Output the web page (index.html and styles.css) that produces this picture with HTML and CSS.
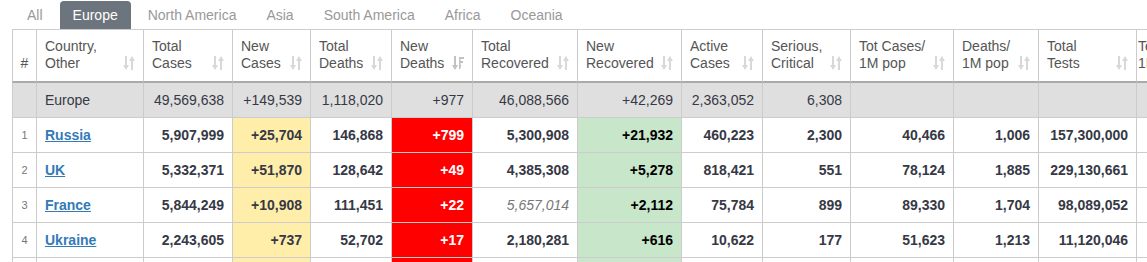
FILE: index.html
```html
<!DOCTYPE html>
<html lang="en">
<head>
<meta charset="utf-8">
<title>Europe</title>
<link rel="stylesheet" href="styles.css">
</head>
<body>
<div class="page">
  <nav class="tabs">
    <span class="tab">All</span>
    <span class="tab active">Europe</span>
    <span class="tab">North America</span>
    <span class="tab">Asia</span>
    <span class="tab">South America</span>
    <span class="tab">Africa</span>
    <span class="tab">Oceania</span>
  </nav>
  <div class="table-wrap">
    <table class="stats">
      <thead>
        <tr>
          <th class="w-rank">#</th>
          <th class="w-country"><div class="hd"><span>Country,<br>Other</span><svg class="sort" viewBox="0 0 12 14"><path d="M2 0h2v9h2l-3 5-3-5h2zM8 14h2V5h2L9 0 6 5h2z"/></svg></div></th>
          <th class="w-tc"><div class="hd"><span>Total<br>Cases</span><svg class="sort" viewBox="0 0 12 14"><path d="M2 0h2v9h2l-3 5-3-5h2zM8 14h2V5h2L9 0 6 5h2z"/></svg></div></th>
          <th class="w-nc"><div class="hd"><span>New<br>Cases</span><svg class="sort" viewBox="0 0 12 14"><path d="M2 0h2v9h2l-3 5-3-5h2zM8 14h2V5h2L9 0 6 5h2z"/></svg></div></th>
          <th class="w-td"><div class="hd"><span>Total<br>Deaths</span><svg class="sort" viewBox="0 0 12 14"><path d="M2 0h2v9h2l-3 5-3-5h2zM8 14h2V5h2L9 0 6 5h2z"/></svg></div></th>
          <th class="w-nd"><div class="hd"><span>New<br>Deaths</span><svg class="sort desc" viewBox="0 0 12 14"><path d="M2 0h2v9h2l-3 5-3-5h2zM7 1h5v2H7zM7 5h4v2H7zM7 9h2v2H7zM7 1h1.5v12H7z"/></svg></div></th>
          <th class="w-tr"><div class="hd"><span>Total<br>Recovered</span><svg class="sort" viewBox="0 0 12 14"><path d="M2 0h2v9h2l-3 5-3-5h2zM8 14h2V5h2L9 0 6 5h2z"/></svg></div></th>
          <th class="w-nr"><div class="hd"><span>New<br>Recovered</span><svg class="sort" viewBox="0 0 12 14"><path d="M2 0h2v9h2l-3 5-3-5h2zM8 14h2V5h2L9 0 6 5h2z"/></svg></div></th>
          <th class="w-ac"><div class="hd"><span>Active<br>Cases</span><svg class="sort" viewBox="0 0 12 14"><path d="M2 0h2v9h2l-3 5-3-5h2zM8 14h2V5h2L9 0 6 5h2z"/></svg></div></th>
          <th class="w-sc"><div class="hd"><span>Serious,<br>Critical</span><svg class="sort" viewBox="0 0 12 14"><path d="M2 0h2v9h2l-3 5-3-5h2zM8 14h2V5h2L9 0 6 5h2z"/></svg></div></th>
          <th class="w-cpm"><div class="hd"><span>Tot&nbsp;Cases/<br>1M pop</span><svg class="sort" viewBox="0 0 12 14"><path d="M2 0h2v9h2l-3 5-3-5h2zM8 14h2V5h2L9 0 6 5h2z"/></svg></div></th>
          <th class="w-dpm"><div class="hd"><span>Deaths/<br>1M pop</span><svg class="sort" viewBox="0 0 12 14"><path d="M2 0h2v9h2l-3 5-3-5h2zM8 14h2V5h2L9 0 6 5h2z"/></svg></div></th>
          <th class="w-tt"><div class="hd"><span>Total<br>Tests</span><svg class="sort" viewBox="0 0 12 14"><path d="M2 0h2v9h2l-3 5-3-5h2zM8 14h2V5h2L9 0 6 5h2z"/></svg></div></th>
          <th class="w-tpm cut"><div class="hd"><span>Tests/<br>1M pop</span><svg class="sort" viewBox="0 0 12 14"><path d="M2 0h2v9h2l-3 5-3-5h2zM8 14h2V5h2L9 0 6 5h2z"/></svg></div></th>
        </tr>
      </thead>
      <tbody>
        <tr class="total">
          <td class="rank"></td>
          <td class="country">Europe</td>
          <td>49,569,638</td>
          <td>+149,539</td>
          <td>1,118,020</td>
          <td>+977</td>
          <td>46,088,566</td>
          <td>+42,269</td>
          <td>2,363,052</td>
          <td>6,308</td>
          <td></td>
          <td></td>
          <td></td>
          <td></td>
        </tr>
        <tr>
          <td class="rank">1</td>
          <td class="country"><a href="#">Russia</a></td>
          <td>5,907,999</td>
          <td class="nc">+25,704</td>
          <td>146,868</td>
          <td class="nd">+799</td>
          <td>5,300,908</td>
          <td class="nr">+21,932</td>
          <td>460,223</td>
          <td>2,300</td>
          <td>40,466</td>
          <td>1,006</td>
          <td>157,300,000</td>
          <td></td>
        </tr>
        <tr>
          <td class="rank">2</td>
          <td class="country"><a href="#">UK</a></td>
          <td>5,332,371</td>
          <td class="nc">+51,870</td>
          <td>128,642</td>
          <td class="nd">+49</td>
          <td>4,385,308</td>
          <td class="nr">+5,278</td>
          <td>818,421</td>
          <td>551</td>
          <td>78,124</td>
          <td>1,885</td>
          <td>229,130,661</td>
          <td></td>
        </tr>
        <tr>
          <td class="rank">3</td>
          <td class="country"><a href="#">France</a></td>
          <td>5,844,249</td>
          <td class="nc">+10,908</td>
          <td>111,451</td>
          <td class="nd">+22</td>
          <td class="est">5,657,014</td>
          <td class="nr">+2,112</td>
          <td>75,784</td>
          <td>899</td>
          <td>89,330</td>
          <td>1,704</td>
          <td>98,089,052</td>
          <td></td>
        </tr>
        <tr>
          <td class="rank">4</td>
          <td class="country"><a href="#">Ukraine</a></td>
          <td>2,243,605</td>
          <td class="nc">+737</td>
          <td>52,702</td>
          <td class="nd">+17</td>
          <td>2,180,281</td>
          <td class="nr">+616</td>
          <td>10,622</td>
          <td>177</td>
          <td>51,623</td>
          <td>1,213</td>
          <td>11,120,046</td>
          <td></td>
        </tr>
        <tr>
          <td class="rank">5</td>
          <td class="country"><a href="#">Poland</a></td>
          <td>2,909,435</td>
          <td class="nc">+1,205</td>
          <td>74,569</td>
          <td class="nd">+14</td>
          <td>2,663,470</td>
          <td class="nr">+3,117</td>
          <td>171,396</td>
          <td>482</td>
          <td>76,961</td>
          <td>1,972</td>
          <td>19,835,622</td>
          <td></td>
        </tr>
      </tbody>
    </table>
  </div>
</div>
</body>
</html>
```

FILE: styles.css
```css
html, body {
  margin: 0;
  overflow: hidden;
  background: #fff;
}

body {
  font-family: "Liberation Sans", Arial, sans-serif;
  font-size: 14px;
  color: #363945;
}

.page {
  padding: 1px 0 0 12px;
}

.tabs {
  display: flex;
  height: 28px;
}

.tab {
  padding: 6px 15px 6px;
  line-height: 16px;
  color: #999;
  white-space: nowrap;
}

.tab.active {
  background: #6c757d;
  color: #fff;
  border-radius: 4px 4px 0 0;
  padding: 6px 13px 6px;
  margin: 0 2px;
}

.table-wrap {
  overflow: hidden;
}

.stats {
  border-collapse: separate;
  border-spacing: 0;
  table-layout: fixed;
  width: 1225px;
}

.stats th,
.stats td {
  box-sizing: border-box;
  border-right: 1px solid #ccc;
  border-bottom: 1px solid #ccc;
}

.stats th:first-child,
.stats td:first-child {
  border-left: 1px solid #ccc;
}

.stats th {
  border-top: 1px solid #ccc;
  border-bottom: 2px solid #aaa;
  padding: 8px 8px 9px;
  line-height: 17px;
  font-weight: normal;
  color: #555;
  text-align: left;
  vertical-align: bottom;
}

.stats th.w-rank {
  text-align: center;
  padding-left: 0;
  padding-right: 0;
}

.stats th.cut {
  padding-left: 1px;
}

.w-rank { width: 25px; }
.w-country { width: 107px; }
.w-tc { width: 89px; }
.w-nc { width: 78px; }
.w-td { width: 81px; }
.w-nd { width: 81px; }
.w-tr { width: 105px; }
.w-nr { width: 104px; }
.w-ac { width: 81px; }
.w-sc { width: 88px; }
.w-cpm { width: 103px; }
.w-dpm { width: 85px; }
.w-tt { width: 98px; }
.w-tpm { width: 100px; }

.hd {
  display: flex;
  justify-content: space-between;
  align-items: flex-end;
  white-space: nowrap;
}

.sort {
  flex: none;
  width: 12px;
  height: 14px;
  margin-bottom: 2px;
  fill: #d8d8d8;
}

.sort.desc {
  fill: #c2c2c2;
}

.stats td {
  padding: 8px;
  line-height: 18px;
  text-align: right;
  font-weight: bold;
  white-space: nowrap;
  overflow: hidden;
}

.stats td.rank {
  font-size: 11px;
  font-weight: normal;
  color: #777;
  text-align: center;
  padding-left: 0;
  padding-right: 0;
}

.stats td.country {
  text-align: left;
}

.stats td.country a {
  color: #337ab7;
  text-decoration: underline;
  font-weight: bold;
}

.stats tr.total td {
  background: #dfdfdf;
  font-weight: normal;
  color: #363945;
}

.stats td.nc {
  background: #ffeeaa;
}

.stats td.nd {
  background: #ff0000;
  color: #fff;
}

.stats td.nr {
  background: #c8e6c9;
  color: #000;
}

.stats td.est {
  font-style: italic;
  font-weight: normal;
  color: #777;
}
```
